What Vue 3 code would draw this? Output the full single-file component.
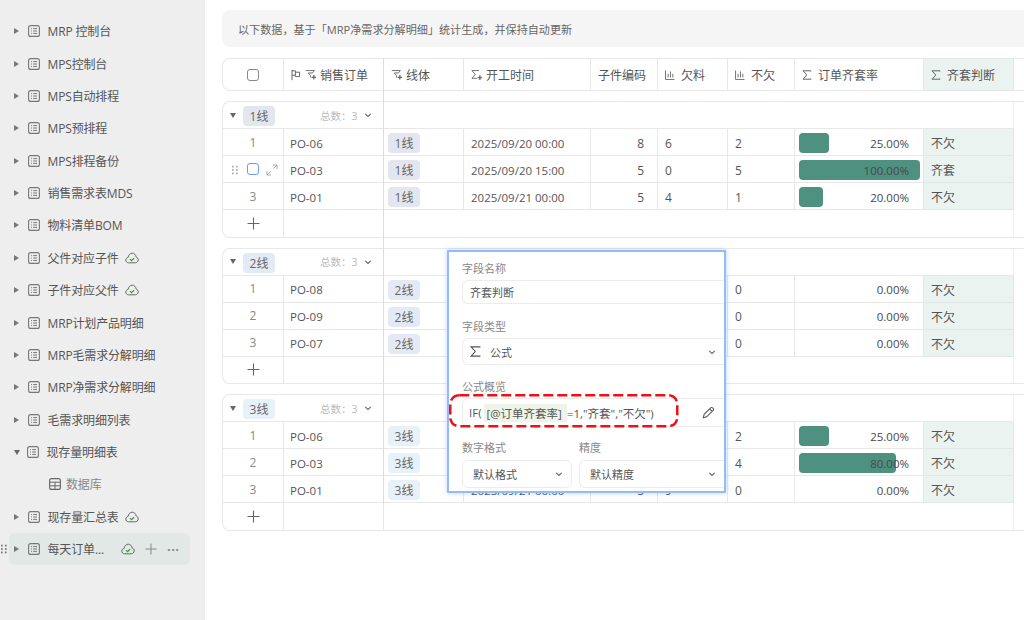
<script setup>
const menu = [
  { name: "MRP 控制台" },
  { name: "MPS控制台" },
  { name: "MPS自动排程" },
  { name: "MPS预排程" },
  { name: "MPS排程备份" },
  { name: "销售需求表MDS" },
  { name: "物料清单BOM" },
  { name: "父件对应子件", synced: true },
  { name: "子件对应父件", synced: true },
  { name: "MRP计划产品明细" },
  { name: "MRP毛需求分解明细" },
  { name: "MRP净需求分解明细" },
  { name: "毛需求明细列表" },
  { name: "现存量明细表", open: true },
  { name: "数据库", child: true },
  { name: "现存量汇总表", synced: true },
  { name: "每天订单...", active: true },
];

const groups = [
  {
    line: "1线",
    tone: "tone-1",
    rows: [
      { order: "PO-06", start: "2025/09/20 00:00", code: 8, lack: 6, ok: 2, rate: 25, judge: "不欠" },
      { order: "PO-03", start: "2025/09/20 15:00", code: 5, lack: 0, ok: 5, rate: 100, judge: "齐套", hover: true },
      { order: "PO-01", start: "2025/09/21 00:00", code: 5, lack: 4, ok: 1, rate: 20, judge: "不欠" },
    ],
  },
  {
    line: "2线",
    tone: "tone-2",
    rows: [
      { order: "PO-08", start: "2025/09/20 00:00", code: 6, lack: 6, ok: 0, rate: 0, judge: "不欠" },
      { order: "PO-09", start: "2025/09/20 15:00", code: 4, lack: 4, ok: 0, rate: 0, judge: "不欠" },
      { order: "PO-07", start: "2025/09/21 00:00", code: 3, lack: 3, ok: 0, rate: 0, judge: "不欠" },
    ],
  },
  {
    line: "3线",
    tone: "tone-3",
    rows: [
      { order: "PO-06", start: "2025/09/20 00:00", code: 8, lack: 6, ok: 2, rate: 25, judge: "不欠" },
      { order: "PO-03", start: "2025/09/20 15:00", code: 5, lack: 1, ok: 4, rate: 80, judge: "不欠" },
      { order: "PO-01", start: "2025/09/21 00:00", code: 5, lack: 9, ok: 0, rate: 0, judge: "不欠" },
    ],
  },
];

// the bar track is 121px wide
const barWidth = (rate) => rate * 1.21 + "px";
</script>

<template>
  <svg class="defs" aria-hidden="true">
    <symbol id="i-doc" viewBox="0 0 12 12">
      <rect x="0.6" y="0.6" width="10.8" height="10.8" rx="2" fill="none" stroke="currentColor" stroke-width="1.1" />
      <path d="M3 3.6h.9M3 6h.9M3 8.4h.9M5.2 3.6h3.8M5.2 6h3.8M5.2 8.4h3.8" stroke="currentColor" fill="none" />
    </symbol>
    <symbol id="i-table" viewBox="0 0 12 12">
      <rect x="0.6" y="0.6" width="10.8" height="10.8" rx="2" fill="none" stroke="currentColor" stroke-width="1.1" />
      <path d="M0.6 4.2h10.8M0.6 7.8h10.8M6 4.2v7.2" stroke="currentColor" fill="none" />
    </symbol>
    <symbol id="i-cloud" viewBox="0 0 14 12">
      <path d="M3.6 10.8C2 10.8.8 9.6.8 8.1c0-1.4 1-2.5 2.3-2.7C3.5 3 5.1 1.2 7.2 1.2c2 0 3.6 1.6 3.8 3.7 1.3.3 2.2 1.5 2.2 2.9 0 1.7-1.3 3-2.9 3z" fill="none" stroke="#666" stroke-width="1" />
      <path d="M5 7.2l1.5 1.5 2.6-2.5" fill="none" stroke="#3d9a3d" stroke-width="1.2" />
    </symbol>
    <symbol id="i-chev" viewBox="0 0 8 8">
      <path d="M1.2 2.8L4 5.4l2.8-2.6" fill="none" stroke="currentColor" stroke-width="1.1" />
    </symbol>
    <symbol id="i-flag" viewBox="0 0 10 12">
      <path d="M1 .8v10.4M1 1.8h3.4v4.4H1M4.4 3.2h4.2v4.4H4.4V6.2" fill="none" stroke="currentColor" />
    </symbol>
    <symbol id="i-link" viewBox="0 0 13 12">
      <path d="M.8 1.2h9.4L8 3.8H3.6L6 6.6v2.2" fill="none" stroke="currentColor" />
      <path d="M9.6 6v5M7.2 8.5h4.8" fill="none" stroke="currentColor" stroke-width="1.4" />
    </symbol>
    <symbol id="i-sum-plus" viewBox="0 0 13 12">
      <path d="M8.6 1.2H1l3.6 4.2L1 9.6h5.4" fill="none" stroke="currentColor" />
      <path d="M9.6 6.4v5M7.2 8.9H12" fill="none" stroke="currentColor" stroke-width="1.4" />
    </symbol>
    <symbol id="i-sum" viewBox="0 0 10 10">
      <path d="M9 1.4V.8H1l3.8 4.2L1 9.2h8v-.6" fill="none" stroke="currentColor" />
    </symbol>
    <symbol id="i-bars" viewBox="0 0 11 11">
      <path d="M.6.6v9.8h9.8M3.4 4.2v4M6 1.6v6.6M8.6 4.2v4" fill="none" stroke="currentColor" />
    </symbol>
    <symbol id="i-dots" viewBox="0 0 7 10">
      <g fill="currentColor">
        <rect x="0" y="0" width="2" height="2" /><rect x="4.6" y="0" width="2" height="2" />
        <rect x="0" y="4" width="2" height="2" /><rect x="4.6" y="4" width="2" height="2" />
        <rect x="0" y="8" width="2" height="2" /><rect x="4.6" y="8" width="2" height="2" />
      </g>
    </symbol>
    <symbol id="i-expand" viewBox="0 0 12 12">
      <path d="M7 1h4v4M11 1L7.4 4.6M5 11H1V7M1 11l3.6-3.6" fill="none" stroke="currentColor" />
    </symbol>
    <symbol id="i-plus" viewBox="0 0 13 13">
      <path d="M6.5.5v12M.5 6.5h12" fill="none" stroke="currentColor" stroke-width="1.1" />
    </symbol>
    <symbol id="i-pen" viewBox="0 0 14 14">
      <path d="M1.4 12.6l.9-3.6 7-7c.6-.6 1.5-.6 2.1 0l.6.6c.6.6.6 1.5 0 2.1l-7 7zM8.2 3.1l2.7 2.7" fill="none" stroke="currentColor" stroke-width="1.1" />
    </symbol>
  </svg>

  <div class="page">
    <aside class="sidebar">
      <div
        v-for="item in menu"
        :key="item.name"
        class="menu-item"
        :class="{ active: item.active, child: item.child }"
      >
        <svg v-if="item.active" class="grip"><use href="#i-dots" /></svg>
        <span v-if="!item.child" class="caret" :class="{ down: item.open }"></span>
        <svg class="menu-icon" :class="{ muted: item.child }"><use :href="item.child ? '#i-table' : '#i-doc'" /></svg>
        <span class="menu-name">{{ item.name }}</span>
        <svg v-if="item.synced" class="cloud"><use href="#i-cloud" /></svg>
        <div v-if="item.active" class="menu-actions">
          <svg class="cloud"><use href="#i-cloud" /></svg>
          <svg class="act-plus"><use href="#i-plus" /></svg>
          <span class="more">···</span>
        </div>
      </div>
    </aside>

    <main class="content">
      <div class="banner">以下数据，基于「MRP净需求分解明细」统计生成，并保持自动更新</div>

      <div class="table">
        <div class="grid head-row">
          <div class="cell center"><span class="check"></span></div>
          <div class="cell"><svg class="hd flag"><use href="#i-flag" /></svg><svg class="hd"><use href="#i-link" /></svg>销售订单</div>
          <div class="cell"><svg class="hd"><use href="#i-link" /></svg>线体</div>
          <div class="cell"><svg class="hd"><use href="#i-sum-plus" /></svg>开工时间</div>
          <div class="cell">子件编码</div>
          <div class="cell"><svg class="hd small"><use href="#i-bars" /></svg>欠料</div>
          <div class="cell"><svg class="hd small"><use href="#i-bars" /></svg>不欠</div>
          <div class="cell"><svg class="hd small"><use href="#i-sum" /></svg>订单齐套率</div>
          <div class="cell judge"><svg class="hd small"><use href="#i-sum" /></svg>齐套判断</div>
          <div class="cell plain"></div>
        </div>

        <section v-for="group in groups" :key="group.line" class="group">
          <div class="grid">
            <div class="group-title">
              <span class="caret down"></span>
              <span class="tag" :class="group.tone">{{ group.line }}</span>
              <span class="total">总数：3</span>
              <svg class="chev"><use href="#i-chev" /></svg>
            </div>
            <div class="group-fill"></div>
            <div></div>
          </div>

          <div v-for="(row, i) in group.rows" :key="row.order" class="grid data-row">
            <div class="cell index">
              <template v-if="row.hover">
                <svg class="row-grip"><use href="#i-dots" /></svg>
                <span class="check blue"></span>
                <svg class="expand"><use href="#i-expand" /></svg>
              </template>
              <template v-else>{{ i + 1 }}</template>
            </div>
            <div class="cell latin order">{{ row.order }}</div>
            <div class="cell tag-cell"><span class="tag" :class="group.tone">{{ group.line }}</span></div>
            <div class="cell latin">{{ row.start }}</div>
            <div class="cell num">{{ row.code }}</div>
            <div class="cell">{{ row.lack }}</div>
            <div class="cell">{{ row.ok }}</div>
            <div class="cell rate latin">
              <span v-if="row.rate" class="bar" :style="{ width: barWidth(row.rate) }"></span>
              <span class="rate-text">{{ row.rate }}.00%</span>
            </div>
            <div class="cell judge">{{ row.judge }}</div>
            <div></div>
          </div>

          <div class="grid add-row">
            <div class="cell center"><svg class="add"><use href="#i-plus" /></svg></div>
            <div class="cell"></div>
            <div class="add-fill"></div>
            <div></div>
          </div>
        </section>

        <div class="freeze-line"></div>

        <div class="popup">
          <label>字段名称</label>
          <div class="field name-field">齐套判断</div>

          <label>字段类型</label>
          <div class="field type-field">
            <svg class="type-icon"><use href="#i-sum" /></svg>
            公式
            <svg class="chev end"><use href="#i-chev" /></svg>
          </div>

          <label>公式概览</label>
          <div class="field formula">
            IF(<span class="ref">[@订单齐套率]</span>=1,"齐套","不欠")
            <svg class="pen"><use href="#i-pen" /></svg>
          </div>

          <div class="split">
            <div class="split-left">
              <label>数字格式</label>
              <div class="field option">默认格式<svg class="chev end"><use href="#i-chev" /></svg></div>
            </div>
            <div class="split-right">
              <label>精度</label>
              <div class="field option">默认精度<svg class="chev end"><use href="#i-chev" /></svg></div>
            </div>
          </div>

          <svg class="callout" width="230" height="34">
            <rect x="1.25" y="1.25" width="227" height="31" rx="9" fill="none" stroke="#f00f14" stroke-width="2.5" stroke-dasharray="10 4" />
          </svg>
        </div>
      </div>
    </main>
  </div>
</template>

<style>
html,
body {
  margin: 0;
  background: #fff;
  overflow: hidden;
}
</style>

<style scoped>
.defs {
  position: absolute;
  width: 0;
  height: 0;
}

.page {
  display: flex;
  width: 1024px;
  height: 620px;
  overflow: hidden;
  font-family: "Open Sans", "Noto Sans CJK SC", sans-serif;
  font-size: 12px;
  color: #555;
}

.sidebar {
  flex: 0 0 205px;
  box-sizing: border-box;
  padding-top: 15px;
  background: #eeeeee;
  letter-spacing: -0.15px;
}

.menu-item {
  position: relative;
  display: flex;
  align-items: center;
  height: 32.38px;
  padding-left: 14px;
  box-sizing: border-box;
  white-space: nowrap;
}

.menu-item.child {
  padding-left: 49px;
  color: #888;
}

.menu-item.active {
  margin: 0 15px 0 9px;
  padding-left: 5px;
  border-radius: 6px;
  background: #e1e8e6;
}

.grip {
  position: absolute;
  left: -8px;
  top: 11px;
  width: 6px;
  height: 10px;
  color: #777;
}

.caret {
  width: 0;
  height: 0;
  margin-right: 9px;
  border-left: 5px solid #777;
  border-top: 3.5px solid transparent;
  border-bottom: 3.5px solid transparent;
}

.caret.down {
  margin-right: 7px;
  border-left: 3.5px solid transparent;
  border-right: 3.5px solid transparent;
  border-top: 5px solid #666;
  border-bottom: 0;
}

.menu-icon {
  flex: none;
  width: 12px;
  height: 12px;
  margin-right: 7.5px;
  color: #777;
}

.menu-icon.muted {
  margin-right: 5px;
  color: #666;
}

.cloud {
  flex: none;
  width: 14px;
  height: 12px;
  margin-left: 6px;
}

.menu-actions {
  display: flex;
  align-items: center;
  margin-left: 11px;
  color: #888;
}

.act-plus {
  width: 12px;
  height: 12px;
  margin-left: 10px;
}

.more {
  margin-left: 10px;
  font-size: 13px;
  font-weight: 700;
  letter-spacing: 0.5px;
}

.content {
  flex: 1;
  min-width: 0;
  padding: 10px 0 0 17px;
}

.banner {
  display: flex;
  align-items: center;
  height: 37px;
  padding-left: 16px;
  border-radius: 8px 0 0 8px;
  background: #f5f5f5;
  color: #666;
  font-size: 11.1px;
}

.table {
  position: relative;
  margin-top: 11px;
}

.grid {
  display: grid;
  grid-template-columns: 61px 100px 80px 127px 67px 70px 67px 129px 90px 1fr;
}

.cell {
  display: flex;
  align-items: center;
  box-sizing: border-box;
  padding-left: 7px;
  border-right: 1px solid #e8e8e8;
  border-bottom: 1px solid #e8e8e8;
  white-space: nowrap;
}

.cell.plain {
  border-right: 0;
}

.center {
  justify-content: center;
  padding-left: 0;
}

.head-row {
  height: 33px;
  box-sizing: border-box;
  border-top: 1px solid #e8e8e8;
  border-left: 1px solid #e8e8e8;
  border-radius: 8px 0 0 8px;
}

.head-row .cell {
  height: 32px;
}

.head-row .cell:first-child {
  border-radius: 0 0 0 8px;
}

.hd {
  flex: none;
  width: 12px;
  height: 12px;
  margin-right: 3px;
  color: #666;
}

.hd.flag {
  width: 10px;
  margin-right: 4px;
}

.hd.small {
  width: 10px;
  height: 10px;
  margin-right: 6px;
}

.judge {
  background: #ebf3f0;
  border-color: #dfe8e5;
  color: #555;
}

.check {
  display: block;
  width: 10px;
  height: 10px;
  border: 1px solid #888;
  border-radius: 3px;
}

.check.blue {
  border-color: #6f9cf0;
}

.group {
  box-sizing: border-box;
  height: 136.5px;
  margin-top: 10px;
  border: 1px solid #e8e8e8;
  border-right: 0;
  border-radius: 8px 0 0 8px;
}

.group-title {
  grid-column: 1 / 3;
  display: flex;
  align-items: center;
  height: 27px;
  box-sizing: border-box;
  padding: 2px 0 0 7px;
  border-bottom: 1px solid #e8e8e8;
}

.group-title .caret {
  margin-right: 7px;
  margin-top: -2px;
}

.group-fill {
  grid-column: 3 / 10;
  border-right: 1px solid #f0f0f0;
  border-bottom: 1px solid #e8e8e8;
}

.add-fill {
  grid-column: 3 / 10;
  border-right: 1px solid #f0f0f0;
}

.tag {
  display: inline-flex;
  align-items: center;
  justify-content: center;
  width: 32px;
  height: 20px;
  border-radius: 4px;
  color: #666;
}

.tone-1 {
  background: #e3e6ee;
}

.tone-2 {
  background: #e3eaf6;
}

.tone-3 {
  background: #e6f1fa;
}

.total {
  margin-left: 45px;
  margin-top: -2px;
  color: #bbb;
  font-size: 10.5px;
}

.chev {
  flex: none;
  width: 8px;
  height: 8px;
  margin-left: 6px;
  margin-top: -2px;
  color: #666;
}

.chev.end {
  margin: 0 0 0 auto;
}

.data-row {
  height: 27px;
}

.data-row .cell:not(.index) {
  padding-top: 2px;
}

.latin {
  font-size: 11.5px;
}

.order {
  padding-left: 6px;
}

.index {
  position: relative;
  justify-content: center;
  padding-left: 0;
  color: #888;
}

.row-grip {
  position: absolute;
  left: 9px;
  top: 9px;
  width: 6px;
  height: 10px;
  color: #aaa;
}

.expand {
  position: absolute;
  left: 43px;
  top: 8px;
  width: 12px;
  height: 12px;
  color: #aaa;
}

.tag-cell {
  padding-left: 4px;
}

.num {
  justify-content: flex-end;
  padding: 0 13px 0 0;
}

.rate {
  position: relative;
  padding: 0 4px 0 4px;
  justify-content: flex-end;
}

.bar {
  position: absolute;
  left: 4px;
  top: 4px;
  height: 20px;
  border-radius: 4px;
  background: #4e9180;
}

.rate-text {
  position: relative;
  padding-right: 10px;
  color: #484848;
}

.add-row {
  height: 26.5px;
}

.add-row .cell {
  border-bottom: 0;
}

.add {
  width: 13px;
  height: 13px;
  color: #666;
}

.freeze-line {
  position: absolute;
  left: 161px;
  top: 0;
  width: 1px;
  height: 446px;
  background: #dcdcdc;
}

.popup {
  position: absolute;
  left: 225px;
  top: 192px;
  z-index: 2;
  box-sizing: border-box;
  width: 279px;
  height: 243px;
  padding: 9px 0 0 13px;
  border: 2px solid #93bcf6;
  background: #fff;
  box-shadow: 0 0 5px rgba(70, 135, 240, 0.35);
  color: #555;
  font-size: 11px;
}

.popup label {
  display: block;
  height: 15px;
  line-height: 15px;
  color: #888;
}

.field {
  display: flex;
  align-items: center;
  box-sizing: border-box;
  padding-left: 7px;
  border: 1px solid #ececec;
  border-right: 0;
  border-radius: 6px 0 0 6px;
  white-space: nowrap;
}

.name-field {
  height: 24px;
  margin: 4px 0 15px;
}

.type-field {
  height: 27px;
  margin: 4px 0 14px;
  padding-right: 8px;
}

.type-icon {
  width: 11px;
  height: 11px;
  margin-right: 9px;
  color: #555;
}

.formula {
  height: 29px;
  margin: 4px 0 13px;
  padding-left: 6px;
  padding-right: 9px;
  font-size: 11.5px;
}

.ref {
  display: inline-flex;
  align-items: center;
  height: 18px;
  margin-left: 2px;
  padding: 0 5px 0 3px;
  background: #eef5e8;
}

.pen {
  width: 13px;
  height: 13px;
  margin-left: auto;
  color: #555;
}

.split {
  display: flex;
  gap: 7px;
}

.split-left {
  flex: 0 0 110px;
}

.split-right {
  flex: 1;
}

.option {
  height: 28px;
  margin-top: 5px;
  padding: 0 8px 0 10px;
  border: 1px solid #ececec;
  border-radius: 6px;
}

.split-right .option {
  border-right: 0;
  border-radius: 6px 0 0 6px;
}

.callout {
  position: absolute;
  left: 0;
  top: 142px;
  pointer-events: none;
}
</style>
